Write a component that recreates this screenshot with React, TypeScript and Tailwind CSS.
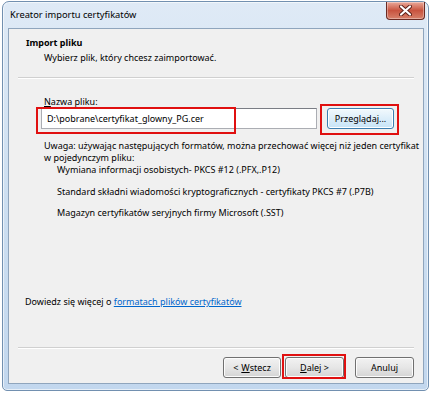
import React from "react";

const Btn = (props: { children: React.ReactNode; focused?: boolean; className?: string }) => (
    <div
        className={
            "h-[21px] flex items-center justify-center rounded-[3px] border text-[9px] leading-none text-black " +
            (props.focused
                ? "border-[#3c7fb1] bg-gradient-to-b from-[#f2f9fd] via-[#dceefa] to-[#c6e4f7] shadow-[inset_0_0_0_1px_#ffffff]"
                : "border-[#707070] bg-gradient-to-b from-[#f2f2f2] via-[#e6e6e6] to-[#d4d4d4] shadow-[inset_0_0_0_1px_#fcfcfc]") +
            " " + (props.className || "")
        }
    >
        {props.children}
    </div>
);

const CloseButton = () => (
    <div className="w-[39px] h-[18px] rounded-b-[4px] border border-t-0 border-[#6b2a22] bg-gradient-to-b from-[#e9a99a] via-[#c8533f] to-[#d6806a] flex items-center justify-center shadow-[inset_0_0_0_1px_rgba(255,255,255,0.35)]">
        <svg width="13" height="11" viewBox="0 0 13 11">
            <path d="M2 1.5 L11 9.5 M11 1.5 L2 9.5" stroke="#5a1e16" strokeWidth="4" strokeLinecap="round"/>
            <path d="M2 1.5 L11 9.5 M11 1.5 L2 9.5" stroke="#ffffff" strokeWidth="2.2" strokeLinecap="round"/>
        </svg>
    </div>
);

export default function App() {
    return (
        <div className="w-[433px] h-[394px] bg-white pt-[1px] pl-[2px] font-['Noto_Sans',sans-serif] relative">
            {/* window frame */}
            <div className="w-[427px] h-[390px] rounded-t-[7px] rounded-b-[5px] border border-[#7290b0] bg-gradient-to-b from-[#dfeaf6] via-[#cddff1] to-[#c2d7ee] flex flex-col shadow-[inset_0_0_0_1px_rgba(255,255,255,0.6)]">
                <div className="h-[26px] flex items-start justify-between">
                    <span className="pl-[7px] pt-[7px] text-[9.3px] leading-[12px] text-black">Kreator importu certyfikatów</span>
                    <div className="mr-[3px]">
                        <CloseButton/>
                    </div>
                </div>
                <div className="flex-1 ml-[5px] mr-[4px] mb-[6px] border border-[#8fa5bd] bg-[#f0f0f0] flex flex-col text-[9px] leading-[12px] text-black">
                    {/* header */}
                    <div className="pt-[7px] pl-[17px]">
                        <div className="font-bold leading-[13px]">Import pliku</div>
                        <div className="pl-[18px] mt-[2px] leading-[13px]">Wybierz plik, który chcesz zaimportować.</div>
                    </div>
                    <div className="mx-[9px] mt-[13px] h-[2px] border-t border-[#d0d0d0] border-b-[#ffffff] border-b"/>
                    {/* body */}
                    <div className="pl-[32px] pt-[17px]">
                        <div className="ml-[3px]"><span className="underline">N</span>azwa pliku:</div>
                        <div className="flex items-center">
                            <div className="w-[276px] h-[21px] bg-white border border-[#abadb3] border-t-[#7a7d85] flex items-center pl-[5px]">
                                D:\pobrane\certyfikat_glowny_PG.cer
                            </div>
                            <Btn focused className="ml-[10px] w-[67px]">Przeglądaj...</Btn>
                        </div>
                        <div className="ml-[3px] mt-[11px] pr-[4px]">
                            Uwaga: używając następujących formatów, można przechować więcej niż jeden certyfikat w pojedynczym pliku:
                        </div>
                        <div className="ml-[16px] flex flex-col gap-[9px]">
                            <div>Wymiana informacji osobistych- PKCS #12 (.PFX,.P12)</div>
                            <div className="mt-[1px]">Standard składni wiadomości kryptograficznych - certyfikaty PKCS #7 (.P7B)</div>
                            <div>Magazyn certyfikatów seryjnych firmy Microsoft (.SST)</div>
                        </div>
                    </div>
                    <div className="mt-auto pl-[16px]">
                        Dowiedz się więcej o <span className="text-[#0066cc] underline">formatach plików certyfikatów</span>
                    </div>
                    <div className="mx-[9px] mt-[39px] h-[2px] border-t border-[#d0d0d0] border-b-[#ffffff] border-b"/>
                    <div className="flex justify-end pr-[9px] pt-[8px] pb-[5px]">
                        <Btn className="w-[58px]">&lt; <span className="underline ml-[3px]">W</span>stecz</Btn>
                        <Btn className="w-[59px] ml-[4px]"><span className="underline">D</span>alej &gt;</Btn>
                        <Btn className="w-[59px] ml-[11px]">Anuluj</Btn>
                    </div>
                </div>
            </div>
            {/* red annotation boxes */}
            <div className="absolute left-[36px] top-[107px] w-[200px] h-[27px] border-2 border-[#e01010]"/>
            <div className="absolute left-[320px] top-[104px] w-[79px] h-[31px] border-2 border-[#e01010]"/>
            <div className="absolute left-[282px] top-[354px] w-[64px] h-[25px] border-2 border-[#e01010]"/>
        </div>
    );
}
